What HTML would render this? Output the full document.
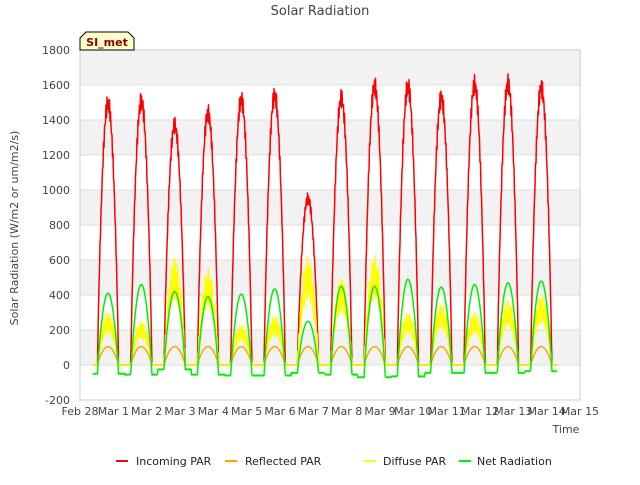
<!DOCTYPE html>
<html><head><style>
body{margin:0;background:#fff;font-family:"Liberation Sans","DejaVu Sans",sans-serif;}
</style></head><body>
<svg id="s" width="640" height="480" xmlns="http://www.w3.org/2000/svg" font-family="DejaVu Sans, Liberation Sans, sans-serif">
<rect width="640" height="480" fill="#fff"/>
<g id="bands"></g>
<g id="grid"></g>
<rect x="80" y="50" width="500" height="350" fill="none" stroke="#ccc"/>
<g id="data" fill="none" stroke-width="1.5" stroke-linejoin="round"></g>
<g id="ax" font-size="11" fill="#444"></g>
<text x="320" y="15" text-anchor="middle" font-size="13" fill="#444">Solar Radiation</text>
<text x="18" y="228" text-anchor="middle" font-size="11" fill="#444" transform="rotate(-90 18 228)">Solar Radiation (W/m2 or um/m2/s)</text>
<text x="566" y="433" text-anchor="middle" font-size="11" fill="#444">Time</text>
<path d="M80,50 L80,38 L86,32 L128,32 L134,38 L134,50 Z" fill="#ffffcc" stroke="#000"/>
<text x="107" y="46" text-anchor="middle" font-size="11" font-weight="bold" fill="#8b0000">SI_met</text>
<g font-size="11" fill="#222">
<line x1="116" y1="461" x2="128" y2="461" stroke="#f00" stroke-width="2"/><text x="136" y="465">Incoming PAR</text>
<line x1="225" y1="461" x2="237" y2="461" stroke="#ffa500" stroke-width="2"/><text x="245" y="465">Reflected PAR</text>
<line x1="364" y1="461" x2="376" y2="461" stroke="#ff0" stroke-width="2"/><text x="383" y="465">Diffuse PAR</text>
<line x1="459" y1="461" x2="471" y2="461" stroke="#0e0" stroke-width="2"/><text x="477" y="465">Net Radiation</text>
</g>
</svg>
<script>
var NS="http://www.w3.org/2000/svg";
function el(p,t,a,txt){var e=document.createElementNS(NS,t);for(var k in a)e.setAttribute(k,a[k]);if(txt)e.textContent=txt;document.getElementById(p).appendChild(e);}
function Y(v){return 365-v*0.175;}
for(var i=0;i<10;i++){var v=1800-i*200;el("bands","rect",{x:80,y:Y(v),width:500,height:35,fill:i%2==0?"#f2f2f2":"#fff"});}
for(var v=-200;v<=1800;v+=200){el("grid","line",{x1:80,x2:580,y1:Y(v),y2:Y(v),stroke:"#ddd"});el("ax","text",{x:70,y:Y(v)+4,"text-anchor":"end"},String(v));}
var lab=["Feb 28","Mar 1","Mar 2","Mar 3","Mar 4","Mar 5","Mar 6","Mar 7","Mar 8","Mar 9","Mar 10","Mar 11","Mar 12","Mar 13","Mar 14","Mar 15"];
for(var d=0;d<16;d++){var x=80+d*33.33;el("ax","text",{x:x,y:415,"text-anchor":"middle"},lab[d]);}
var P=[1550,1560,1420,1490,1570,1595,985,1580,1650,1650,1580,1660,1665,1640];
var N=[410,460,420,390,405,435,250,450,450,490,445,460,470,480];
var D=[300,250,620,550,230,280,620,500,630,300,350,300,370,400];
var NT=[-50,-55,-25,-55,-60,-60,-45,-55,-70,-65,-45,-45,-45,-35];
var a=[],b=[],c=[],n=[];
for(var x=93;x<=557;x+=0.5){var day=Math.floor((x-80-28+16.67)/33.33);if(day<0)day=0;if(day>13)day=13;var cx=80+28+day*33.33;var t=(x-cx)/10.5;var s=Math.abs(t)<1?Math.pow(Math.cos(t*Math.PI/2),0.8):0;
var jit=(Math.sin(x*7.3)*0.5+0.5);
a.push(x+","+Y(P[day]*s*(0.93+0.07*jit)).toFixed(1));
b.push(x+","+Y(105*s).toFixed(1));
c.push(x+","+Y(D[day]*s*(0.6+0.4*jit)).toFixed(1));
n.push(x+","+Y(s>0?N[day]*s+NT[day]*(1-s):NT[day]+3*Math.sin(x*3)).toFixed(1));}
el("data","polyline",{points:a.join(" "),stroke:"#f00"});
el("data","polyline",{points:b.join(" "),stroke:"#ffa500"});
el("data","polyline",{points:c.join(" "),stroke:"#ff0"});
el("data","polyline",{points:n.join(" "),stroke:"#0e0"});
</script>
</body></html>
